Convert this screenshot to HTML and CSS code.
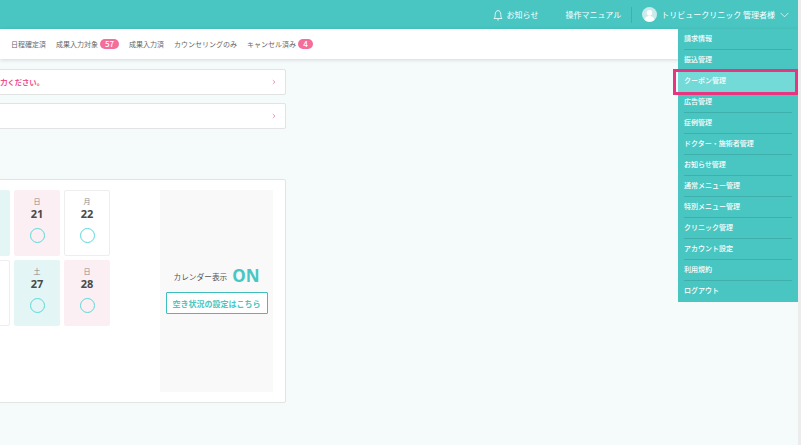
FILE: index.html
```html
<!DOCTYPE html>
<html lang="ja">
<head>
<meta charset="utf-8">
<title>管理画面</title>
<link rel="stylesheet" href="styles.css">
</head>
<body>
<header class="header">
  <a class="hd-link hd-notice">
    <svg class="bell" viewBox="0 0 12 12" width="12" height="12"><path d="M2 9.500c1-1 1.200-2 1.200-4C3.200 3.200 4.400 1.600 6 1.600s2.800 1.600 2.800 3.900c0 2 .2 3 1.200 4z M5 10.500c.5.600 1.500.600 2 0" fill="none" stroke="#fff" stroke-width=".8"/></svg>
    お知らせ
  </a>
  <a class="hd-link hd-manual">操作マニュアル</a>
  <span class="hd-sep"></span>
  <span class="hd-user">
    <svg class="avatar" viewBox="0 0 16 16" width="15" height="15"><circle cx="8" cy="8" r="8" fill="#c9ebea"/><circle cx="8" cy="6.200" r="3" fill="#fff"/><path d="M2.800 13.800c.6-3 2.900-4.100 5.200-4.100s4.600 1.100 5.200 4.100a8 8 0 0 1-10.400 0z" fill="#fff"/></svg>
    トリビュークリニック 管理者様
    <svg class="caret" viewBox="0 0 10 6" width="9" height="6"><path d="M.7.700 5 5 9.300.7" fill="none" stroke="#fff" stroke-width=".8"/></svg>
  </span>
</header>

<nav class="tabs">
  <span class="tab">日程確定済</span>
  <span class="tab">成果入力対象<b class="badge badge-wide">57</b></span>
  <span class="tab">成果入力済</span>
  <span class="tab">カウンセリングのみ</span>
  <span class="tab">キャンセル済み<b class="badge">4</b></span>
</nav>

<main class="main">
  <a class="notice"><span class="notice-text">成果を入力ください。</span><svg class="chev" viewBox="0 0 4 6" width="4" height="6"><path d="M.8 1 3 3 .8 5" fill="none" stroke="#f58fb3" stroke-width=".9"/></svg></a>
  <a class="notice"><span class="notice-text"></span><svg class="chev" viewBox="0 0 4 6" width="4" height="6"><path d="M.8 1 3 3 .8 5" fill="none" stroke="#f58fb3" stroke-width=".9"/></svg></a>

  <section class="panel">
    <div class="cal">
      <div class="cal-row">
        <div class="day day-sat day-cut"></div>
        <div class="day day-sun"><span class="dow">日</span><span class="num">21</span><span class="ring"></span></div>
        <div class="day"><span class="dow">月</span><span class="num">22</span><span class="ring"></span></div>
      </div>
      <div class="cal-row">
        <div class="day day-cut"></div>
        <div class="day day-sat"><span class="dow">土</span><span class="num">27</span><span class="ring"></span></div>
        <div class="day day-sun"><span class="dow">日</span><span class="num">28</span><span class="ring"></span></div>
      </div>
    </div>
    <aside class="side">
      <div class="side-state"><span class="side-label">カレンダー表示</span><span class="side-on">ON</span></div>
      <a class="side-btn">空き状況の設定はこちら</a>
    </aside>
  </section>
</main>

<ul class="menu">
  <li>請求情報</li>
  <li>振込管理</li>
  <li class="active">クーポン管理</li>
  <li>広告管理</li>
  <li>症例管理</li>
  <li>ドクター・施術者管理</li>
  <li>お知らせ管理</li>
  <li>通常メニュー管理</li>
  <li>特別メニュー管理</li>
  <li>クリニック管理</li>
  <li>アカウント設定</li>
  <li>利用規約</li>
  <li>ログアウト</li>
</ul>
<div class="highlight"></div>
</body>
</html>
```

FILE: styles.css
```css
* { box-sizing: border-box; }
html { height: 100%; background: #ececec; }
body {
  margin: 0;
  width: 798px;
  height: 100%;
  position: relative;
  overflow: hidden;
  background: #f4fbfa;
  color: #555;
  font-family: "Noto Sans CJK JP", "Noto Sans", sans-serif;
}
.header {
  height: 29px;
  background: #4ac6c2;
  color: #fff;
  display: flex;
  align-items: center;
  justify-content: flex-end;
  padding-right: 9px;
  font-size: 8px;
}
.hd-link { display: flex; align-items: center; gap: 3px; }
.hd-notice { margin-right: 27px; }
.bell { display: block; }
.hd-sep { width: 1px; height: 16px; background: #3fb0ad; margin: 0 10px; }
.hd-user { display: flex; align-items: center; gap: 4px; }
.caret { margin-left: 1px; }
.tabs {
  height: 30px;
  background: #fff;
  box-shadow: 0 1px 4px rgba(0,0,0,.14);
  display: flex;
  align-items: center;
  gap: 10px;
  padding-left: 11px;
  font-size: 7px;
  color: #666;
  position: relative;
}
.tab { display: flex; align-items: center; gap: 2px; }
.badge {
  background: #f46d9b;
  color: #fff;
  font-size: 8px;
  font-weight: 500;
  line-height: 9px;
  height: 10px;
  min-width: 15px;
  padding: 0 3px;
  border-radius: 5px;
  text-align: center;
}
.badge-wide { min-width: 19px; }
.main {
  width: 286px;
  display: flex;
  flex-direction: column;
  padding-top: 10px;
}
.notice {
  height: 26px;
  margin: 0 0 8px -10px;
  background: #fff;
  border: 1px solid #e2e4e4;
  border-radius: 2px;
  display: flex;
  align-items: center;
  justify-content: flex-end;
  padding: 0 9px 1px 0;
  font-size: 7.300px;
}
.notice-text {
  flex: 1;
  margin-left: -20px;
  color: #f0508c;
  font-weight: 700;
  white-space: nowrap;
}
.chev { display: block; }
.panel {
  height: 224px;
  margin: 42px 0 0 -10px;
  background: #fff;
  border: 1px solid #e2e4e4;
  border-radius: 2px;
  display: flex;
  justify-content: flex-end;
  padding: 10px 12px 10px 0;
}
.cal { display: flex; flex-direction: column; gap: 4px; margin-right: 50px; }
.cal-row { display: flex; gap: 4px; }
.day {
  width: 46px;
  height: 66px;
  background: #fff;
  border: 1px solid #eeeeee;
  border-radius: 2px;
  display: flex;
  flex-direction: column;
  align-items: center;
}
.day-cut { width: 12px; }
.day-sat { background: #e3f6f5; border-color: #e3f6f5; }
.day-sun { background: #fbeff3; border-color: #fbeff3; }
.dow { font-size: 7px; color: #888; line-height: 10px; margin-top: 5px; }
.num { font-size: 11px; font-weight: 700; color: #4a4a4a; line-height: 14px; margin-top: 1px; font-family: "Noto Sans", sans-serif; }
.ring {
  width: 15px;
  height: 15px;
  border: 1.300px solid #5fd8d8;
  border-radius: 50%;
  margin-top: 7px;
}
.side {
  width: 113px;
  background: #f9f9f9;
  display: flex;
  flex-direction: column;
  align-items: center;
  justify-content: center;
  gap: 7px;
  padding-bottom: 1px;
}
.side-state { display: flex; align-items: center; gap: 5px; }
.side-label { font-size: 7.700px; color: #555; }
.side-on { font-size: 17px; line-height: 18px; font-weight: 700; color: #4ac6c2; font-family: "Noto Sans", sans-serif; }
.side-btn {
  width: 102px;
  height: 22px;
  background: #fff;
  border: 1px solid #3fbfbb;
  border-radius: 1px;
  color: #4ac6c2;
  font-size: 8px;
  font-weight: 700;
  display: flex;
  align-items: center;
  justify-content: center;
}
.menu {
  position: absolute;
  top: 29px;
  left: 678px;
  width: 120px;
  margin: 0;
  padding: 0;
  list-style: none;
  background: #4ac6c2;
  color: #fff;
  font-size: 7px;
  font-weight: 500;
}
.menu li {
  height: 21px;
  margin: 0 6px;
  line-height: 19px;
  border-bottom: 1px solid #3fafac;
}
.menu li:last-child { border-bottom: 0; }
.menu li.active {
  margin: 0;
  padding-left: 6px;
  background: #74dad8;
  border-bottom: 0;
}
.highlight {
  position: absolute;
  left: 673px;
  top: 69px;
  width: 125px;
  height: 26px;
  border: 3px solid #e8357f;
}
```
